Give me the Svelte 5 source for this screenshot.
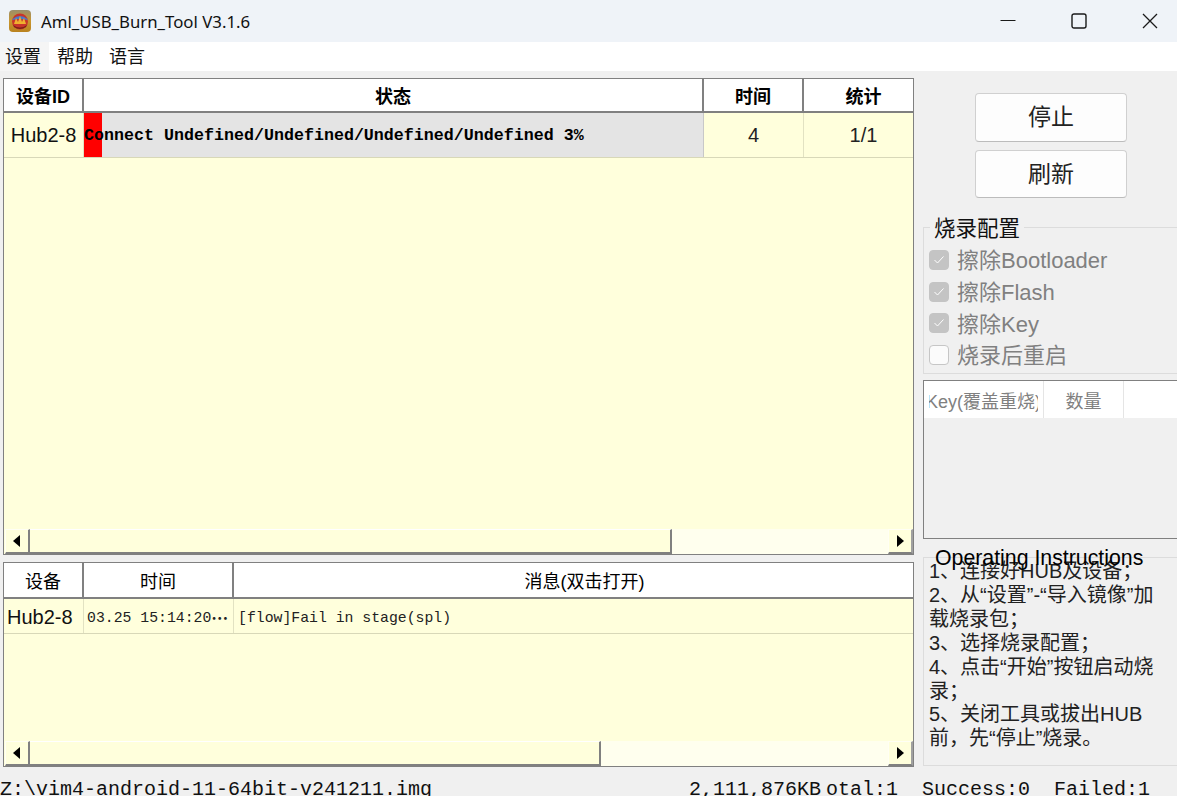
<script>
  const burnOptions = [
    { label: '擦除Bootloader', checked: true },
    { label: '擦除Flash', checked: true },
    { label: '擦除Key', checked: true },
    { label: '烧录后重启', checked: false }
  ];

  const instructions = [
    '1、连接好HUB及设备；',
    '2、从“设置”-“导入镜像”加',
    '载烧录包；',
    '3、选择烧录配置；',
    '4、点击“开始”按钮启动烧',
    '录；',
    '5、关闭工具或拔出HUB',
    '前，先“停止”烧录。'
  ];

  const menus = ['设置', '帮助', '语言'];
</script>

{#snippet scrollbar(thumb)}
  <div class="scrollbar">
    <div class="arrow-btn">
      <svg width="10" height="12" viewBox="0 0 10 12"><path d="M8 0 L8 12 L1 6 Z" fill="#000" /></svg>
    </div>
    <div class="thumb" style="width: {thumb}px"></div>
    <div class="track"></div>
    <div class="arrow-btn">
      <svg width="10" height="12" viewBox="0 0 10 12"><path d="M2 0 L2 12 L9 6 Z" fill="#000" /></svg>
    </div>
  </div>
{/snippet}

<div class="window">
  <div class="titlebar">
    <svg class="logo" width="22" height="22" viewBox="0 0 22 22">
      <defs>
        <linearGradient id="gold" x1="0" y1="0" x2="0" y2="1">
          <stop offset="0" stop-color="#9a8f6c" />
          <stop offset="0.5" stop-color="#c9962f" />
          <stop offset="1" stop-color="#b9821f" />
        </linearGradient>
      </defs>
      <rect width="22" height="22" rx="4" fill="url(#gold)" />
      <circle cx="11" cy="11.5" r="8" fill="#c8352a" />
      <path d="M3.5 9 Q11 3 18.5 9 L18.5 10 Q11 8 3.5 10 Z" fill="#4a78c8" />
      <path d="M5 14 L7 8 L9 12 L11 6 L13 12 L15 8 L17 14 Z" fill="#f0b030" />
      <path d="M4 15 Q11 20 18 15 L17 17 Q11 21 5 17 Z" fill="#7a2418" />
    </svg>
    <div class="title">Aml_USB_Burn_Tool V3.1.6</div>
    <div class="win-controls">
      <svg width="16" height="16" viewBox="0 0 16 16"><path d="M0.5 7.5 H15.5" stroke="#1a1a1a" stroke-width="1" /></svg>
      <svg width="16" height="16" viewBox="0 0 16 16"><rect x="1" y="1" width="14" height="14" rx="2" fill="none" stroke="#1a1a1a" stroke-width="1.4" /></svg>
      <svg width="16" height="16" viewBox="0 0 16 16"><path d="M1 1 L15 15 M15 1 L1 15" stroke="#1a1a1a" stroke-width="1.3" /></svg>
    </div>
  </div>

  <div class="menubar">
    {#each menus as menu, i}
      <div class="menu-item" class:active={i === 0}>{menu}</div>
    {/each}
  </div>

  <div class="content">
    <div class="left">
      <div class="table top-table">
        <div class="head">
          <div class="th bold c-id">设备ID</div>
          <div class="th bold c-state">状态</div>
          <div class="th bold c-time">时间</div>
          <div class="th bold c-stat">统计</div>
        </div>
        <div class="row">
          <div class="td c-id hub">Hub2-8</div>
          <div class="td c-state progress">
            <div class="progress-fill"></div>
            <span class="progress-text">Connect Undefined/Undefined/Undefined/Undefined 3%</span>
          </div>
          <div class="td c-time num">4</div>
          <div class="td c-stat num">1/1</div>
        </div>
        <div class="spacer"></div>
        {@render scrollbar(642)}
      </div>

      <div class="table bottom-table">
        <div class="head">
          <div class="th c-dev">设备</div>
          <div class="th c-when">时间</div>
          <div class="th c-msg">消息(双击打开)</div>
        </div>
        <div class="row">
          <div class="td c-dev hub">Hub2-8</div>
          <div class="td c-when mono">03.25 15:14:20<span class="dots">…</span></div>
          <div class="td c-msg mono msg">[flow]Fail in stage(spl)</div>
        </div>
        <div class="spacer"></div>
        {@render scrollbar(571)}
      </div>
    </div>

    <div class="right">
      <div class="buttons">
        <button class="btn">停止</button>
        <button class="btn">刷新</button>
      </div>

      <div class="group config">
        <div class="legend">烧录配置</div>
        {#each burnOptions as opt}
          <div class="option">
            <span class="check" class:on={opt.checked}>
              {#if opt.checked}
                <svg width="12" height="10" viewBox="0 0 12 10"><path d="M1.5 5 L4.5 8 L10.5 1.5" fill="none" stroke="#fff" stroke-width="1" /></svg>
              {/if}
            </span>
            <span class="option-label">{opt.label}</span>
          </div>
        {/each}
      </div>

      <div class="key-table">
        <div class="key-head">
          <div class="key-col key-name"><div class="key-clip"><span>Key(覆盖重烧)</span></div></div>
          <div class="key-col key-count">数量</div>
        </div>
      </div>

      <div class="group help">
        <div class="help-legend">Operating Instructions</div>
        {#each instructions as line}
          <div class="help-line">{line}</div>
        {/each}
      </div>
    </div>
  </div>

  <div class="statusbar">
    <div class="s-path">Z:\vim4-android-11-64bit-v241211.img</div>
    <div class="s-size">2,111,876KB</div>
    <div class="s-total"><span>Total:1</span></div>
    <div class="s-ok">Success:0</div>
    <div class="s-fail">Failed:1</div>
  </div>
</div>

<style>
  :global(body) {
    margin: 0;
    background: #f0f0f0;
    overflow: hidden;
  }

  .window {
    width: 1177px;
    height: 796px;
    overflow: hidden;
    display: flex;
    flex-direction: column;
    background: #f0f0f0;
    color: #000;
    font-family: "Liberation Sans", "Noto Sans CJK SC", sans-serif;
  }

  .titlebar {
    height: 42px;
    flex: none;
    display: flex;
    align-items: center;
    background: #eff3f8;
    padding-left: 9px;
    box-sizing: border-box;
  }

  .logo {
    flex: none;
  }

  .title {
    margin-left: 10px;
    font-family: "Noto Sans", "Liberation Sans", sans-serif;
    font-size: 16.8px;
    color: #111;
  }

  .win-controls {
    margin-left: auto;
    display: flex;
    gap: 55px;
    padding-right: 19px;
  }

  .menubar {
    height: 29px;
    flex: none;
    display: flex;
    background: #fff;
    font-size: 18px;
  }

  .menu-item {
    width: 52px;
    line-height: 31px;
    padding-left: 5px;
    box-sizing: border-box;
    color: #111;
  }

  .menu-item.active {
    width: 49px;
    background: #f5f5f5;
    margin-right: 3px;
  }

  .content {
    flex: none;
    display: flex;
    height: 704px;
    padding-top: 7px;
    box-sizing: border-box;
  }

  .left {
    width: 911px;
    margin-left: 3px;
    flex: none;
    display: flex;
    flex-direction: column;
    gap: 7px;
  }

  .table {
    box-sizing: border-box;
    border: 1px solid #808080;
    background: #ffffdc;
    display: flex;
    flex-direction: column;
  }

  .top-table {
    height: 477px;
  }

  .bottom-table {
    height: 205px;
  }

  .head {
    display: flex;
    flex: none;
    background: #fff;
    border-bottom: 2px solid #808080;
    height: 32px;
  }

  .bottom-table .head {
    height: 34px;
  }

  .th {
    box-sizing: border-box;
    display: flex;
    align-items: center;
    justify-content: center;
    border-right: 2px solid #808080;
    font-size: 18px;
    flex: none;
  }

  .th:last-child {
    border-right: 0;
  }

  .th.bold {
    font-weight: 700;
  }

  .row {
    display: flex;
    flex: none;
    height: 44px;
    border-bottom: 1px solid #d8d8b8;
  }

  .bottom-table .row {
    height: 34px;
  }

  .bottom-table .td {
    padding-top: 3px;
  }

  .td {
    box-sizing: border-box;
    display: flex;
    align-items: center;
    justify-content: center;
    border-right: 1px solid #e2e2c2;
    flex: none;
    font-size: 20px;
    overflow: hidden;
    white-space: nowrap;
  }

  .td:last-child {
    border-right: 0;
  }

  .c-id { width: 80px; }
  .c-state { width: 620px; }
  .c-time { width: 100px; }
  .c-stat { flex: 1; padding-left: 10px; }

  .c-dev { width: 80px; }
  .c-when { width: 150px; }
  .c-msg { flex: 1; }

  .th.c-msg {
    padding-left: 22px;
  }

  .hub {
    color: #111;
  }

  .c-dev.hub {
    justify-content: flex-start;
    padding-left: 3px;
  }

  .num {
    color: #222;
  }

  .progress {
    position: relative;
    justify-content: flex-start;
    background: #e4e4e4;
    border-right: 1px solid #c8c8c8;
  }

  .progress-fill {
    position: absolute;
    left: 0;
    top: 0;
    bottom: 0;
    width: 18px;
    background: #ff0000;
  }

  .progress-text {
    position: relative;
    font-family: "Liberation Mono", monospace;
    font-weight: 700;
    font-size: 16.67px;
  }

  .mono {
    font-family: "Liberation Mono", monospace;
    font-size: 14.8px;
    color: #222;
  }

  .c-when.mono {
    justify-content: flex-start;
    padding-left: 3px;
  }

  .dots {
    font-family: "Noto Sans CJK SC", sans-serif;
    font-size: 17px;
    font-weight: 700;
  }

  .msg {
    justify-content: flex-start;
    padding-left: 4px;
  }

  .spacer {
    flex: 1;
  }

  .scrollbar {
    flex: none;
    height: 25px;
    display: flex;
    padding-left: 1px;
  }

  .arrow-btn {
    flex: none;
    width: 25px;
    box-sizing: border-box;
    display: flex;
    align-items: center;
    justify-content: center;
    background: #ffffdc;
    border-top: 1px solid #fffff4;
    border-left: 1px solid #fffff4;
    border-right: 2px solid #808080;
    border-bottom: 2px solid #808080;
  }

  .arrow-btn:last-child {
    border-right-color: #a0a0a0;
    padding-right: 1px;
  }

  .thumb {
    flex: none;
    box-sizing: border-box;
    background: #ffffdc;
    border-top: 1px solid #fff;
    border-right: 2px solid #808080;
    border-bottom: 2px solid #808080;
  }

  .track {
    flex: 1;
    background: #ffffee;
  }

  .right {
    width: 254px;
    margin-left: 9px;
    flex: none;
    display: flex;
    flex-direction: column;
  }

  .buttons {
    display: flex;
    flex-direction: column;
    align-items: center;
    gap: 8px;
    padding: 15px 0 0 52px;
    box-sizing: border-box;
    width: 204px;
  }

  .btn {
    width: 152px;
    height: 49px;
    background: #fdfdfd;
    border: 1px solid #d0d0d0;
    border-bottom-color: #bcbcbc;
    border-radius: 4px;
    font-family: "Noto Sans CJK SC", sans-serif;
    font-size: 23px;
    color: #222;
    padding: 0 0 5px;
  }

  .btn:last-child {
    height: 48px;
  }

  .group {
    position: relative;
    box-sizing: border-box;
    border: 1px solid #dcdcdc;
    border-right: 0;
  }

  .legend {
    position: absolute;
    top: -14px;
    left: 6px;
    padding: 0 4px;
    background: #f0f0f0;
    font-family: "Noto Sans CJK SC", sans-serif;
    font-size: 21.5px;
    line-height: 26px;
    color: #111;
  }

  .config {
    margin-top: 29px;
    height: 147px;
    padding: 15px 0 0 5px;
  }

  .option {
    display: flex;
    align-items: center;
    gap: 8px;
    height: 31.8px;
    color: #808080;
    font-size: 22px;
    white-space: nowrap;
  }

  .option-label {
    padding-bottom: 2px;
  }

  .check {
    width: 20px;
    height: 20px;
    box-sizing: border-box;
    margin-top: 2px;
    border-radius: 4px;
    background: #fbfbfb;
    border: 1px solid #c6c6c6;
    display: flex;
    align-items: center;
    justify-content: center;
    flex: none;
  }

  .check.on {
    background: #c4c4c4;
    border-color: #c4c4c4;
  }

  .key-table {
    margin-top: 6px;
    height: 159px;
    box-sizing: border-box;
    border: 1px solid #808080;
    border-right: 0;
  }

  .key-head {
    display: flex;
    height: 37px;
    background: #fff;
  }

  .key-col {
    box-sizing: border-box;
    display: flex;
    align-items: center;
    justify-content: center;
    border-right: 1px solid #e5e5e5;
    color: #808080;
    font-size: 18px;
    overflow: hidden;
    white-space: nowrap;
  }

  .key-name {
    width: 120px;
  }

  .key-clip {
    width: 109px;
    display: flex;
    justify-content: center;
    overflow: hidden;
  }

  .key-clip span {
    flex: none;
  }

  .key-count {
    width: 80px;
  }

  .help {
    margin-top: 18px;
    height: 209px;
    padding: 2px 0 0 5px;
  }

  .help-legend {
    position: absolute;
    top: -13px;
    left: 7px;
    padding: 0 4px;
    font-size: 21.3px;
    line-height: 26px;
    z-index: 1;
    color: #000;
  }

  .help-line {
    font-size: 20px;
    line-height: 23.9px;
    white-space: nowrap;
    color: #222;
  }

  .statusbar {
    flex: none;
    display: flex;
    height: 21px;
    padding-top: 3px;
    font-family: "Liberation Mono", monospace;
    font-size: 20px;
    line-height: 24px;
    color: #111;
    white-space: nowrap;
    overflow: hidden;
  }

  .s-path { width: 689px; }
  .s-size { width: 137px; }
  .s-total { width: 96px; overflow: hidden; }
  .s-total span { margin-left: -12px; display: inline-block; }
  .s-ok { width: 132px; }
</style>
